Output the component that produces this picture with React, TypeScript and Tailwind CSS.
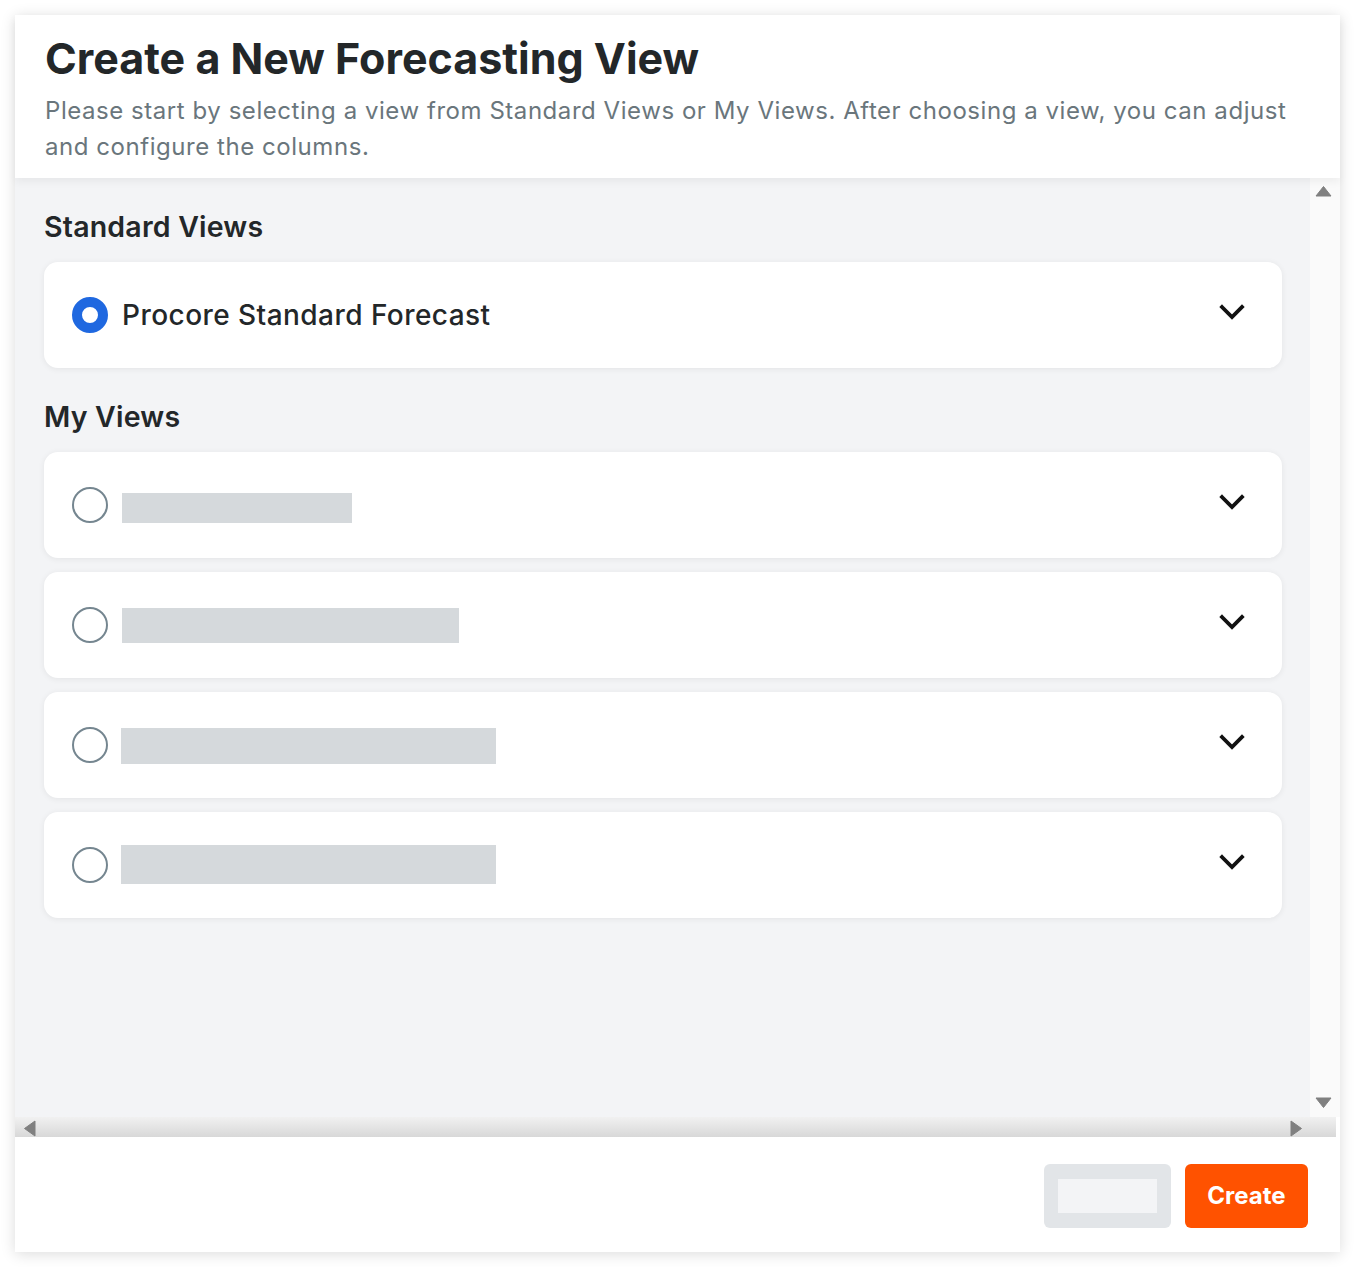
import React from 'react';

const font = { fontFamily: 'Inter, "Noto Sans", "Liberation Sans", sans-serif' };

function Chevron() {
  return (
    <svg width="26" height="17" viewBox="0 0 26 17" className="mb-[6px] shrink-0">
      <polyline
        points="3,3 13,13 23,3"
        fill="none"
        stroke="#111"
        strokeWidth="3.8"
        strokeLinecap="square"
      />
    </svg>
  );
}

function Radio({ checked }: { checked?: boolean }) {
  if (checked) {
    return <span className="w-[36px] h-[36px] rounded-full border-[10.5px] border-[#1f68e0] bg-white shrink-0" />;
  }
  return <span className="w-[36px] h-[36px] rounded-full border-[2.5px] border-[#758690] bg-white shrink-0" />;
}

function ViewCard({ children, checked }: { children: React.ReactNode; checked?: boolean }) {
  return (
    <div className="h-[106px] bg-white rounded-[14px] shadow-[0_1px_6px_rgba(0,0,0,0.07)] flex items-center pl-[28px] pr-[37px]">
      <Radio checked={checked} />
      <div className="flex-1 ml-[14px] flex items-center">{children}</div>
      <Chevron />
    </div>
  );
}

function Bar({ w, h }: { w: string; h: string }) {
  return <div className={`bg-[#d5d9dc] ${w} ${h}`} />;
}

function Triangle({ dir }: { dir: 'up' | 'down' | 'left' | 'right' }) {
  const pts = {
    up: '1,11 8.5,1.5 16,11',
    down: '1,1 16,1 8.5,10.5',
    left: '12,1 12,16 1.5,8.5',
    right: '1,1 1,16 11.5,8.5',
  }[dir];
  const vertical = dir === 'up' || dir === 'down';
  return (
    <svg width={vertical ? 17 : 13} height={vertical ? 12 : 17} viewBox={vertical ? '0 0 17 12' : '0 0 13 17'}>
      <polygon points={pts} fill="#808080" stroke="#808080" strokeWidth="1" strokeLinejoin="round" />
    </svg>
  );
}

export default function App() {
  return (
    <div className="min-h-screen bg-white p-[15px]" style={font}>
      <div className="w-[1325px] h-[1237px] bg-white flex flex-col shadow-[0_2px_14px_rgba(0,0,0,0.14)]">
        <header className="relative z-10 h-[163px] shrink-0 bg-white px-[30px] pt-[25px] shadow-[0_4px_8px_rgba(0,0,0,0.05)]">
          <h1 className="text-[43px] leading-[36px] font-bold text-[#232729]">
            Create a New Forecasting View
          </h1>
          <p className="mt-[17px] text-[24px] leading-[36px] text-[#6a767c] tracking-[0.55px]">
            Please start by selecting a view from Standard Views or My Views. After choosing a view, you can adjust
            and configure the columns.
          </p>
        </header>

        <div className="flex-1 flex flex-col min-h-0">
          <div className="flex-1 flex min-h-0">
            <div className="flex-1 bg-[#f3f4f6] pl-[29px] pr-[28px] pt-[31px]">
              <h2 className="text-[28.5px] leading-[36px] font-semibold text-[#232729] tracking-[0.2px]">
                Standard Views
              </h2>
              <div className="mt-[17px]">
                <ViewCard checked>
                  <span className="text-[28px] font-medium text-[#232729] tracking-[0.45px]">
                    Procore Standard Forecast
                  </span>
                </ViewCard>
              </div>
              <h2 className="mt-[31px] text-[28.5px] leading-[36px] font-semibold text-[#232729] tracking-[0.2px]">
                My Views
              </h2>
              <div className="mt-[17px] flex flex-col gap-[14px]">
                <ViewCard>
                  <div className="mt-[6px]">
                    <Bar w="w-[230px]" h="h-[30px]" />
                  </div>
                </ViewCard>
                <ViewCard>
                  <Bar w="w-[337px]" h="h-[35px]" />
                </ViewCard>
                <ViewCard>
                  <div className="-ml-[1px] mt-[2px]">
                    <Bar w="w-[375px]" h="h-[36px]" />
                  </div>
                </ViewCard>
                <ViewCard>
                  <div className="-ml-[1px] -mt-[2px]">
                    <Bar w="w-[375px]" h="h-[39px]" />
                  </div>
                </ViewCard>
              </div>
            </div>
            <div className="w-[30px] bg-[#fafafa] flex flex-col items-center justify-between pt-[7px] pb-[8px] pr-[4px]">
              <Triangle dir="up" />
              <Triangle dir="down" />
            </div>
          </div>
          <div className="h-[20px] shrink-0 flex">
            <div className="w-[1321px] bg-gradient-to-b from-[#f1f1f1] to-[#d8d8d8] flex items-center justify-between pl-[8px] pr-[33px] pt-[3px]">
              <Triangle dir="left" />
              <Triangle dir="right" />
            </div>
          </div>
        </div>

        <footer className="h-[115px] shrink-0 bg-white flex justify-end items-start gap-[14px] pt-[27px] pr-[32px]">
          <div className="w-[127px] h-[64px] rounded-[6px] bg-[#e2e5e8] flex items-center justify-center">
            <div className="w-[99px] h-[34px] bg-[#f3f4f6]" />
          </div>
          <button
            type="button"
            className="w-[123px] h-[64px] rounded-[6px] bg-[#ff5200] text-white text-[24px] font-bold"
          >
            Create
          </button>
        </footer>
      </div>
    </div>
  );
}
